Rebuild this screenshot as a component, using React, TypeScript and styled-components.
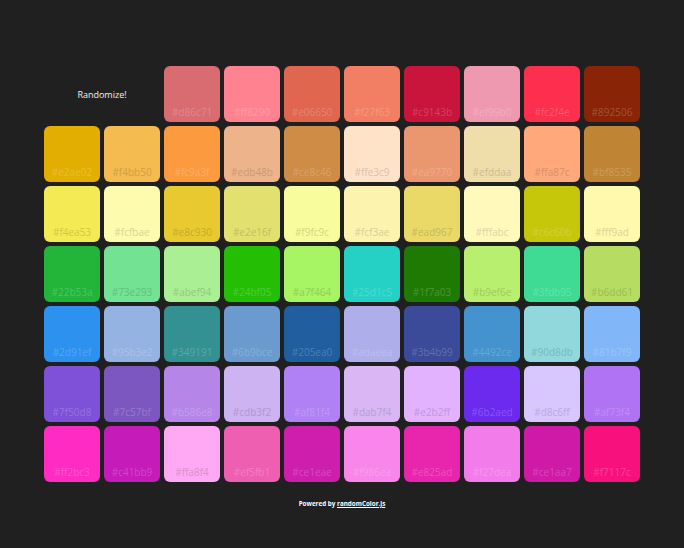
import styled, { createGlobalStyle } from 'styled-components';

const rows: string[][] = [
  ['d86c71', 'ff8290', 'e06650', 'f27f63', 'c9143b', 'ef99b0', 'fc2f4e', '892506'],
  ['e2ae02', 'f4bb50', 'fc9a3f', 'edb48b', 'ce8c46', 'ffe3c9', 'ea9770', 'efddaa', 'ffa87c', 'bf8535'],
  ['f4ea53', 'fcfbae', 'e8c930', 'e2e16f', 'f9fc9c', 'fcf3ae', 'ead967', 'fffabc', 'c6c60b', 'fff9ad'],
  ['22b53a', '73e293', 'abef94', '24bf05', 'a7f464', '25d1c5', '1f7a03', 'b9ef6e', '3fdb95', 'b6dd61'],
  ['2d91ef', '95b3e2', '349191', '6b9bce', '205ea0', 'adaeea', '3b4b99', '4492ce', '90d8db', '81b7f9'],
  ['7f50d8', '7c57bf', 'b586e8', 'cdb3f2', 'af81f4', 'dab7f4', 'e2b2ff', '6b2aed', 'd8c6ff', 'af73f4'],
  ['ff2bc3', 'c41bb9', 'ffa8f4', 'ef5fb1', 'ce1eae', 'f986ea', 'e825ad', 'f27dea', 'ce1aa7', 'f7117c'],
];

// label colour: a lighter shade on dark swatches, a darker one on light swatches
function labelColor(hex: string) {
  const r = parseInt(hex.slice(0, 2), 16);
  const g = parseInt(hex.slice(2, 4), 16);
  const b = parseInt(hex.slice(4, 6), 16);
  const lum = (0.299 * r + 0.587 * g + 0.114 * b) / 255;
  const mix = (c: number) =>
    lum > 0.72 ? Math.round(c * 0.85) : Math.round(c + (255 - c) * 0.2);
  return `rgb(${mix(r)}, ${mix(g)}, ${mix(b)})`;
}

function App() {
  return (
    <>
      <GlobalStyle />
      <Page>
        <Grid>
          <Randomize>Randomize!</Randomize>
          {rows.flat().map((c, i) => (
            <Swatch key={i} $bg={c}>
              <span style={{ color: labelColor(c) }}>#{c}</span>
            </Swatch>
          ))}
        </Grid>
        <Footer>
          Powered by <a href='#'>randomColor.js</a>
        </Footer>
      </Page>
    </>
  );
}

export default App;

const GlobalStyle = createGlobalStyle`
  html, body {
    margin: 0;
    background: #202020;
  }
  body {
    font-family: 'Open Sans', 'Noto Sans', sans-serif;
  }
`;

const Page = styled.div`
  width: 684px;
  height: 548px;
  display: flex;
  flex-direction: column;
  align-items: center;
  padding-top: 66px;
  box-sizing: border-box;
`;

const Grid = styled.div`
  display: grid;
  grid-template-columns: repeat(10, 56px);
  grid-auto-rows: 56px;
  gap: 4px;
`;

const Randomize = styled.div`
  grid-column: span 2;
  display: flex;
  align-items: center;
  justify-content: center;
  color: #f2f2f2;
  font-size: 9px;
  padding-top: 1px;
`;

const Swatch = styled.div<{ $bg: string }>`
  background: #${(p) => p.$bg};
  border-radius: 6px;
  display: flex;
  align-items: flex-end;
  justify-content: center;
  font-size: 10px;
  padding-bottom: 3px;
  box-sizing: border-box;
`;

const Footer = styled.div`
  margin-top: 17px;
  color: #ffffff;
  font-size: 6.3px;
  font-weight: 700;
  a {
    color: #ffffff;
  }
`;
